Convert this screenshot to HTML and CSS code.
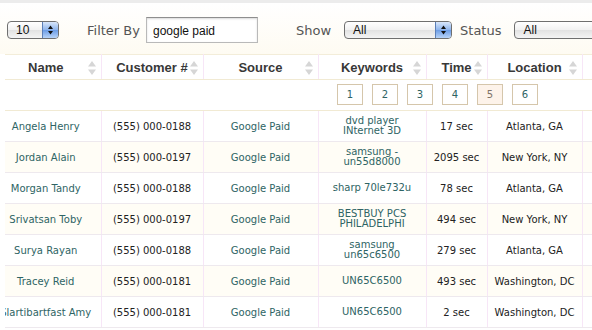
FILE: index.html
```html
<!DOCTYPE html>
<html lang="en">
<head>
    <meta charset="UTF-8">
    <meta name="viewport" content="width=device-width, initial-scale=1.0">
    <title>Leads</title>
    <link rel="stylesheet" href="styles.css">
</head>
<body>
    <div class="toolbar">
        <div class="select select-count">
            <span class="select-value">10</span>
            <span class="select-arrow"><svg width="7" height="10" viewBox="0 0 7 10"><path d="M3.5 0.5 L6 4 H1 Z M1 6 H6 L3.5 9.5 Z" fill="#111"/></svg></span>
        </div>
        <span class="tool-label filter-label">Filter By</span>
        <input class="filter-input" type="text" value="google paid">
        <span class="tool-label show-label">Show</span>
        <div class="select select-show">
            <span class="select-value">All</span>
            <span class="select-arrow"><svg width="7" height="10" viewBox="0 0 7 10"><path d="M3.5 0.5 L6 4 H1 Z M1 6 H6 L3.5 9.5 Z" fill="#111"/></svg></span>
        </div>
        <span class="tool-label status-label">Status</span>
        <div class="select select-status">
            <span class="select-value">All</span>
        </div>
    </div>

    <div class="table-wrap">
        <table class="leads">
            <colgroup>
                <col class="col-name">
                <col class="col-customer">
                <col class="col-source">
                <col class="col-keywords">
                <col class="col-time">
                <col class="col-location">
                <col class="col-extra">
            </colgroup>
            <thead>
                <tr class="head-row">
                    <th>Name<svg class="sort" width="8" height="14" viewBox="0 0 8 14"><path d="M4 0 L8 5.5 H0 Z M0 8.5 H8 L4 14 Z"/></svg></th>
                    <th>Customer #<svg class="sort" width="8" height="14" viewBox="0 0 8 14"><path d="M4 0 L8 5.5 H0 Z M0 8.5 H8 L4 14 Z"/></svg></th>
                    <th>Source<svg class="sort" width="8" height="14" viewBox="0 0 8 14"><path d="M4 0 L8 5.5 H0 Z M0 8.5 H8 L4 14 Z"/></svg></th>
                    <th>Keywords<svg class="sort" width="8" height="14" viewBox="0 0 8 14"><path d="M4 0 L8 5.5 H0 Z M0 8.5 H8 L4 14 Z"/></svg></th>
                    <th>Time<svg class="sort" width="8" height="14" viewBox="0 0 8 14"><path d="M4 0 L8 5.5 H0 Z M0 8.5 H8 L4 14 Z"/></svg></th>
                    <th>Location<svg class="sort" width="8" height="14" viewBox="0 0 8 14"><path d="M4 0 L8 5.5 H0 Z M0 8.5 H8 L4 14 Z"/></svg></th>
                    <th></th>
                </tr>
                <tr class="pager-row">
                    <td colspan="7">
                        <div class="pager">
                            <a class="page">1</a>
                            <a class="page">2</a>
                            <a class="page">3</a>
                            <a class="page">4</a>
                            <a class="page current">5</a>
                            <a class="page">6</a>
                        </div>
                    </td>
                </tr>
            </thead>
            <tbody>
                <tr>
                    <td class="link"><div class="cell">Angela Henry</div></td>
                    <td>(555) 000-0188</td>
                    <td class="link">Google Paid</td>
                    <td class="link kw">dvd player INternet 3D</td>
                    <td>17 sec</td>
                    <td>Atlanta, GA</td>
                    <td></td>
                </tr>
                <tr class="alt">
                    <td class="link"><div class="cell">Jordan Alain</div></td>
                    <td>(555) 000-0197</td>
                    <td class="link">Google Paid</td>
                    <td class="link kw">samsung - un55d8000</td>
                    <td>2095 sec</td>
                    <td>New York, NY</td>
                    <td></td>
                </tr>
                <tr>
                    <td class="link"><div class="cell">Morgan Tandy</div></td>
                    <td>(555) 000-0188</td>
                    <td class="link">Google Paid</td>
                    <td class="link kw">sharp 70le732u</td>
                    <td>78 sec</td>
                    <td>Atlanta, GA</td>
                    <td></td>
                </tr>
                <tr class="alt">
                    <td class="link"><div class="cell">Srivatsan Toby</div></td>
                    <td>(555) 000-0197</td>
                    <td class="link">Google Paid</td>
                    <td class="link kw">BESTBUY PCS PHILADELPHI</td>
                    <td>494 sec</td>
                    <td>New York, NY</td>
                    <td></td>
                </tr>
                <tr>
                    <td class="link"><div class="cell">Surya Rayan</div></td>
                    <td>(555) 000-0188</td>
                    <td class="link">Google Paid</td>
                    <td class="link kw">samsung un65c6500</td>
                    <td>279 sec</td>
                    <td>Atlanta, GA</td>
                    <td></td>
                </tr>
                <tr class="alt">
                    <td class="link"><div class="cell">Tracey Reid</div></td>
                    <td>(555) 000-0181</td>
                    <td class="link">Google Paid</td>
                    <td class="link kw">UN65C6500</td>
                    <td>493 sec</td>
                    <td>Washington, DC</td>
                    <td></td>
                </tr>
                <tr>
                    <td class="link"><div class="cell">Slartibartfast Amy</div></td>
                    <td>(555) 000-0181</td>
                    <td class="link">Google Paid</td>
                    <td class="link kw">UN65C6500</td>
                    <td>2 sec</td>
                    <td>Washington, DC</td>
                    <td></td>
                </tr>
            </tbody>
        </table>
    </div>
</body>
</html>
```

FILE: styles.css
```css
body {
    margin: 0;
    padding: 0;
    background: #fff;
    overflow: hidden;
    font-family: "DejaVu Sans", Verdana, sans-serif;
}

/* filter bar */
.toolbar {
    display: flex;
    align-items: center;
    height: 48px;
    padding-top: 3px;
    border-top: 3px solid #ececec;
    background: linear-gradient(#ffffff, #fefbf2);
    overflow: hidden;
    white-space: nowrap;
}

.select {
    display: flex;
    align-items: center;
    flex-shrink: 0;
    box-sizing: border-box;
    height: 18px;
    border: 1px solid #6f6f6f;
    border-radius: 4px;
    background: linear-gradient(#ffffff, #f1f1f1 50%, #e2e2e2 51%, #f4f4f4);
    font-family: "Liberation Sans", Arial, sans-serif;
    font-size: 12px;
    color: #111;
    overflow: hidden;
}

.select-value {
    flex: 1;
    padding-left: 8px;
}

.select-arrow {
    display: flex;
    align-items: center;
    justify-content: center;
    width: 15px;
    height: 100%;
    border-left: 1px solid #5b7fb8;
    background: linear-gradient(#d9e7fb, #8db4ec 50%, #6b9ce6 51%, #b7d3f8);
}

.select-count {
    width: 52px;
    margin-left: 7px;
}

.select-show {
    width: 108px;
    margin-left: 13px;
}

.select-status {
    width: 120px;
    margin-left: 13px;
}

.tool-label {
    font-size: 13px;
    color: #555;
}

.filter-label {
    margin-left: 28px;
}

.show-label {
    margin-left: 38px;
}

.status-label {
    margin-left: 8px;
}

.filter-input {
    box-sizing: border-box;
    width: 112px;
    height: 26px;
    margin: 0 0 0 6px;
    padding: 2px 6px 0;
    border: 1px solid #b9b9b9;
    border-top-color: #8e8e8e;
    box-shadow: inset 0 1px 2px rgba(0, 0, 0, 0.15);
    font-family: "Liberation Sans", Arial, sans-serif;
    font-size: 12px;
    color: #111;
    background: #fff;
}

/* table */
.table-wrap {
    margin-left: 5px;
    overflow: hidden;
}

.leads {
    margin-left: -14px;
    width: 691px;
    table-layout: fixed;
    border-collapse: collapse;
    font-size: 10px;
    color: #222;
}

.col-name { width: 110px; }
.col-customer { width: 102px; }
.col-source { width: 115px; }
.col-keywords { width: 108px; }
.col-time { width: 61px; }
.col-location { width: 95px; }
.col-extra { width: 100px; }

.head-row th {
    position: relative;
    height: 24px;
    padding: 0;
    border-top: 1px solid #f3edd9;
    border-bottom: 1px solid #f1ead3;
    border-right: 1px solid #f7e6f7;
    background: #fff;
    font-family: "Liberation Sans", Arial, sans-serif;
    font-size: 13px;
    font-weight: bold;
    color: #383838;
    text-align: center;
}

.sort {
    position: absolute;
    right: 5px;
    top: 6px;
    fill: #d6d6d6;
}

.pager-row td {
    height: 30px;
    padding: 0;
    border-bottom: 1px solid #f1ead3;
}

.pager {
    display: flex;
    gap: 9px;
    padding: 0 0 1px 346px;
}

.page {
    box-sizing: border-box;
    width: 26px;
    height: 21px;
    line-height: 19px;
    border: 1px solid #d5c6ab;
    text-align: center;
    font-size: 10px;
    color: #2e6464;
    background: #fff;
}

.page.current {
    background: #fdf3ea;
    color: #807468;
}

.leads tbody td {
    height: 30px;
    padding: 0 4px;
    border-bottom: 1px solid #eee9ee;
    border-right: 1px solid #f7e6f7;
    text-align: center;
    white-space: nowrap;
    overflow: visible;
}

.leads tbody td.kw {
    padding: 0 10px;
    white-space: normal;
    line-height: 10px;
}

.leads tbody tr.alt td {
    background: #fffdf6;
}

.link {
    color: #2e6464;
}

.cell {
    display: flex;
    justify-content: center;
    white-space: nowrap;
}
```
